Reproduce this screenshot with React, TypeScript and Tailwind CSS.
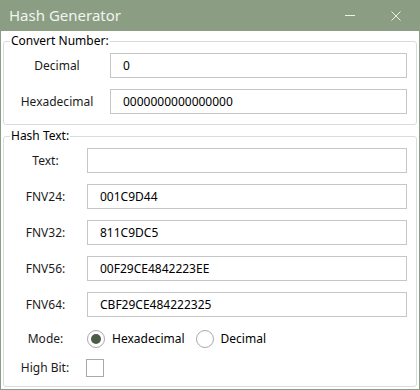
import React from 'react';

const font = { fontFamily: '"Noto Sans", "Open Sans", sans-serif' };

const Row = ({ label, value, labelW }: { label: string; value: string; labelW: string }) => (
  <div className="flex items-center h-[25px]">
    <div className={`${labelW} text-center text-[12px] text-[#1b1b1b] shrink-0`}>{label}</div>
    <div className="flex-1 h-[25px] mr-[9px] border border-[#c6c6c6] bg-white flex items-center pl-[12px] text-[12px] text-black">
      {value}
    </div>
  </div>
);

export default function App() {
  return (
    <div style={font} className="w-[420px] h-[390px] flex flex-col bg-[#8b9e84] overflow-hidden">
      <div className="h-[31px] flex items-center shrink-0">
        <div className="pl-[9px] text-[15px] text-[#f2f4f0] flex-1">Hash Generator</div>
        <div className="w-[10px] h-px bg-[#eef0ec] mr-[36px] mt-[-1px]" />
        <svg width="10" height="10" viewBox="0 0 10 10" className="mr-[19px]">
          <path d="M0.5 0.5 L9.5 9.5 M9.5 0.5 L0.5 9.5" stroke="#eef0ec" strokeWidth="1" />
        </svg>
      </div>
      <div className="flex-1 bg-white mx-px mb-px px-[2px] pt-[2px] flex flex-col">
        <fieldset className="border border-[#d5dde3] rounded-[3px] px-0 pb-[10px]">
          <legend className="ml-[6px] px-[1px] text-[12px] leading-[16px] text-black">Convert Number:</legend>
          <div className="flex flex-col gap-[11px] pt-[4px]">
            <Row label="Decimal" value="0" labelW="w-[106px]" />
            <Row label="Hexadecimal" value="0000000000000000" labelW="w-[106px]" />
          </div>
        </fieldset>
        <fieldset className="mt-[3px] border border-[#d5dde3] rounded-[3px] px-0 flex-1 mb-[2px]">
          <legend className="ml-[6px] px-[1px] text-[12px] leading-[16px] text-black">Hash Text:</legend>
          <div className="flex flex-col gap-[11px] pt-[4px]">
            <Row label="Text:" value="" labelW="w-[83px]" />
            <Row label="FNV24:" value="001C9D44" labelW="w-[83px]" />
            <Row label="FNV32:" value="811C9DC5" labelW="w-[83px]" />
            <Row label="FNV56:" value="00F29CE4842223EE" labelW="w-[83px]" />
            <Row label="FNV64:" value="CBF29CE484222325" labelW="w-[83px]" />
          </div>
          <div className="flex items-center h-[18px] mt-[13px]">
            <div className="w-[83px] text-center text-[12px] text-[#1b1b1b]">Mode:</div>
            <div className="w-[18px] h-[18px] rounded-full border border-[#a9a9a9] flex items-center justify-center">
              <div className="w-[10px] h-[10px] rounded-full bg-[#4b5c47]" />
            </div>
            <div className="ml-[7px] text-[12px] text-black">Hexadecimal</div>
            <div className="ml-[11px] w-[18px] h-[18px] rounded-full border border-[#a9a9a9]" />
            <div className="ml-[7px] text-[12px] text-black">Decimal</div>
          </div>
          <div className="flex items-center h-[18px] mt-[11px]">
            <div className="w-[82px] text-center text-[12px] text-[#1b1b1b]">High Bit:</div>
            <div className="w-[18px] h-[18px] border border-[#a9a9a9] bg-white" />
          </div>
        </fieldset>
      </div>
    </div>
  );
}
